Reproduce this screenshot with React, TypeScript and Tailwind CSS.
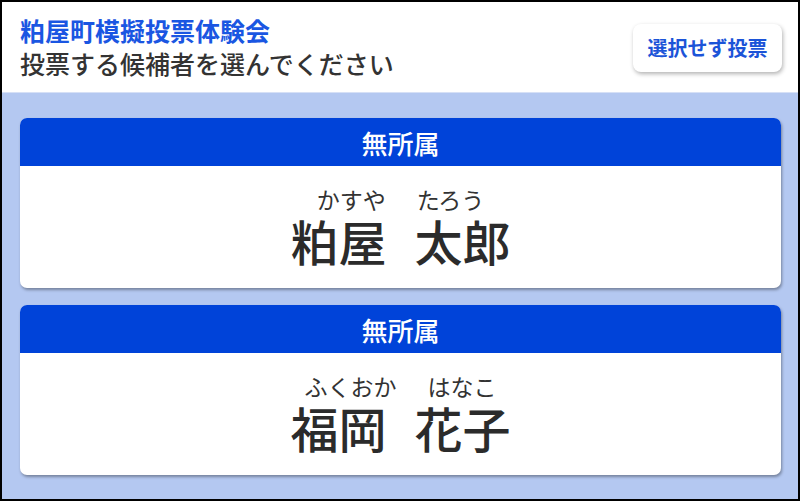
const candidates = [
  { party: "無所属", sei: "粕屋", mei: "太郎", seiKana: "かすや", meiKana: "たろう" },
  { party: "無所属", sei: "福岡", mei: "花子", seiKana: "ふくおか", meiKana: "はなこ" },
];

function CandidateCard({ c }: { c: (typeof candidates)[number] }) {
  return (
    <div className="flex h-[170px] flex-col overflow-hidden rounded-[7px] bg-white shadow-[1px_2px_3px_rgba(0,0,0,0.35)]">
      <div className="flex h-[48px] items-center justify-center bg-[#0043d9] text-[26px] font-medium text-white">
        {c.party}
      </div>
      <div className="flex flex-1 flex-col items-center justify-center gap-[5px] pb-[2px] text-[#2b2b2b]">
        <div className="flex justify-center gap-[31px] text-[23px] leading-[23px] text-[#333]">
          <span>{c.seiKana}</span>
          <span>{c.meiKana}</span>
        </div>
        <div className="flex justify-center gap-[28px] text-[48px] font-medium leading-[48px]">
          <span>{c.sei}</span>
          <span>{c.mei}</span>
        </div>
      </div>
    </div>
  );
}

export default function App() {
  return (
    <div
      className="flex h-[501px] w-[800px] flex-col border-2 border-black bg-[#b4c8f1]"
      style={{ fontFamily: '"Noto Sans CJK JP", "Noto Sans", sans-serif' }}
    >
      <header className="flex h-[91px] items-center justify-between border-b border-[#d6e0f6] bg-white pl-[18px] pr-[16px]">
        <div className="leading-[33px]">
          <h1 className="text-[25px] font-bold text-[#1a56e2]">粕屋町模擬投票体験会</h1>
          <p className="text-[25px] font-medium text-[#333]">投票する候補者を選んでください</p>
        </div>
        <button className="mt-[2px] h-[48px] w-[149px] rounded-[8px] bg-white text-[20px] font-bold text-[#1c54d8] shadow-[1px_2px_4px_rgba(0,0,0,0.3)]">
          選択せず投票
        </button>
      </header>
      <main className="flex flex-col gap-[17px] pl-[18px] pr-[17px] pt-[25px]">
        {candidates.map((c) => (
          <CandidateCard key={c.sei} c={c} />
        ))}
      </main>
    </div>
  );
}
